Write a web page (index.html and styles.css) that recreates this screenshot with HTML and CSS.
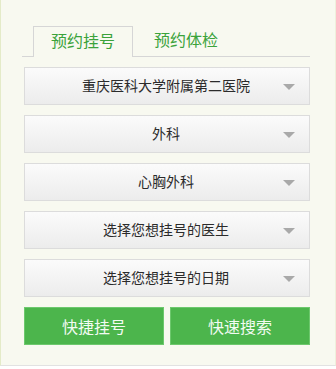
FILE: index.html
```html
<!DOCTYPE html>
<html lang="zh-CN">
<head>
  <meta charset="UTF-8">
  <title>预约挂号</title>
  <link rel="stylesheet" href="styles.css">
</head>
<body>
  <div class="panel">
    <div class="tabs">
      <div class="tab active">预约挂号</div>
      <div class="tab">预约体检</div>
    </div>

    <div class="form">
      <div class="select"><span>重庆医科大学附属第二医院</span><i class="arrow"></i></div>
      <div class="select"><span>外科</span><i class="arrow"></i></div>
      <div class="select"><span>心胸外科</span><i class="arrow"></i></div>
      <div class="select"><span>选择您想挂号的医生</span><i class="arrow"></i></div>
      <div class="select"><span>选择您想挂号的日期</span><i class="arrow"></i></div>

      <div class="actions">
        <button class="btn">快捷挂号</button>
        <button class="btn">快速搜索</button>
      </div>
    </div>
  </div>
</body>
</html>
```

FILE: styles.css
```css
* {
  margin: 0;
  padding: 0;
  box-sizing: border-box;
}

body {
  font-family: "Liberation Sans", "Noto Sans CJK SC", sans-serif;
  background: #fff;
  width: 336px;
  height: 369px;
  overflow: hidden;
}

.panel {
  height: 366px;
  background: #f8f9f0;
  border-left: 1px solid #e4ebc8;
  border-right: 1px solid #eef1dc;
  border-bottom: 1px solid #e2e2e2;
  padding: 26px 25px 0 21px;
}

.tabs {
  display: flex;
  height: 31px;
  border-bottom: 1px solid #d6d6d6;
  padding-left: 11px;
}

.tab {
  width: 100px;
  height: 31px;
  line-height: 30px;
  text-align: center;
  font-size: 16px;
  color: #3ba33b;
  margin-right: 3px;
}

.tab.active {
  background: #f8f9f0;
  border: 1px solid #d6d6d6;
  border-bottom: none;
}

.form {
  padding: 10px 0 0 2px;
}

.select {
  position: relative;
  height: 38px;
  margin-bottom: 10px;
  border: 1px solid #dcdcdc;
  background: linear-gradient(#fbfbfb, #ececec);
  text-align: center;
  line-height: 36px;
  font-size: 14px;
  color: #2b2b2b;
}

.select span {
  display: inline-block;
  padding-right: 2px;
}

.arrow {
  position: absolute;
  right: 14px;
  top: 16px;
  width: 0;
  height: 0;
  border-left: 6px solid transparent;
  border-right: 6px solid transparent;
  border-top: 6px solid #a9a9a9;
}

.actions {
  display: flex;
  gap: 6px;
}

.btn {
  flex: 1;
  height: 38px;
  border: 1px solid #6dc86d;
  background: #4cb54c;
  color: #f2fbf2;
  font-family: inherit;
  font-size: 16px;
}
```
